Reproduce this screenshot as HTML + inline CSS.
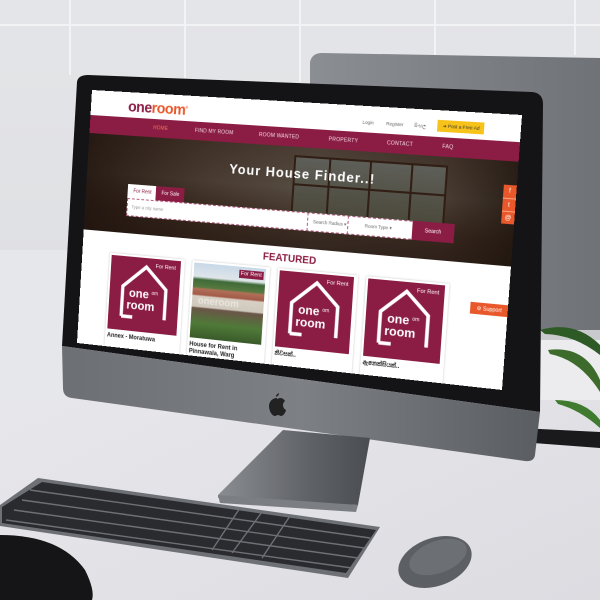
<!DOCTYPE html>
<html><head><meta charset="utf-8"><style>
*{margin:0;padding:0;box-sizing:border-box}
body{width:600px;height:600px;overflow:hidden;position:relative;background:#e2e3e6;font-family:"Liberation Sans","Noto Sans CJK SC",sans-serif}
svg.bg{position:absolute;left:0;top:0}
#scr{position:absolute;left:0;top:0;width:430px;height:255px;background:#fff;overflow:hidden;transform-origin:0 0;
transform:matrix3d(0.90123,0.036372,0,-0.00018921,-0.05643,1.00282,0,0.00003112,0,0,1,0,92,90,0,1)}
.abs{position:absolute}
.nav{left:0;top:25px;width:430px;height:18px;background:#8b1c43}
.nav span{position:absolute;top:6px;font-size:5px;color:#f3dbe3;letter-spacing:.2px}
.hero{left:0;top:43px;width:430px;height:97px;background:
linear-gradient(90deg,rgba(35,22,15,.9) 0%,rgba(60,42,30,.6) 30%,rgba(80,70,60,.4) 55%,rgba(60,45,35,.6) 85%,rgba(35,24,16,.85) 100%),
linear-gradient(180deg,#6a5a4c 0%,#8a8070 40%,#4a3526 75%,#2e2018 100%)}
.win{border:2px solid #3a2418}
.card{background:#fff;box-shadow:0 0 2px rgba(0,0,0,.25)}
.ci{background:#8b1c43}
.fr{position:absolute;right:5px;top:5px;font-size:5.5px;color:#fff}
.cap{position:absolute;left:2px;font-size:6px;font-weight:bold;color:#222;line-height:7px}
</style></head><body>
<svg class="bg" width="600" height="600" viewBox="0 0 600 600">
<defs>
<linearGradient id="wall" x1="0" y1="0" x2="0" y2="1"><stop offset="0" stop-color="#e4e5e8"/><stop offset="1" stop-color="#d9dadd"/></linearGradient>
<linearGradient id="desk" x1="0" y1="0" x2="1" y2="1"><stop offset="0" stop-color="#e9e9ed"/><stop offset="1" stop-color="#dcdce1"/></linearGradient>
<linearGradient id="mon2" x1="0" y1="0" x2="1" y2="0"><stop offset="0" stop-color="#8b8e93"/><stop offset="1" stop-color="#6f7378"/></linearGradient>
<linearGradient id="chin" x1="0" y1="0" x2="1" y2="0"><stop offset="0" stop-color="#6c6f74"/><stop offset=".5" stop-color="#7d8085"/><stop offset="1" stop-color="#5a5d62"/></linearGradient>
<linearGradient id="stand" x1="0" y1="0" x2="1" y2="0"><stop offset="0" stop-color="#8a8d92"/><stop offset=".6" stop-color="#5f6267"/><stop offset="1" stop-color="#4a4d52"/></linearGradient>
</defs>
<rect width="600" height="600" fill="url(#wall)"/>
<g stroke="#f2f3f5" stroke-width="2">
<line x1="70" y1="0" x2="70" y2="75"/><line x1="185" y1="0" x2="185" y2="78"/><line x1="300" y1="0" x2="300" y2="82"/><line x1="435" y1="0" x2="435" y2="55"/><line x1="575" y1="0" x2="575" y2="55"/>
<line x1="0" y1="25" x2="600" y2="25"/>
</g>
<rect x="0" y="330" width="600" height="270" fill="url(#desk)"/>
<rect x="0" y="250" width="70" height="150" fill="#e6e7ea"/>
<path d="M310 62 Q312 53 322 53 L600 58 L600 330 L310 330 Z" fill="url(#mon2)"/>
<rect x="530" y="330" width="70" height="18" fill="#c9cacd"/>
<rect x="520" y="340" width="80" height="60" fill="#ececef"/>
<path d="M520 428 L600 432 L600 448 L520 442 Z" fill="#1a1a1c"/>
<path d="M540 330 Q575 320 600 345 L600 355 Q575 335 545 334 Z" fill="#2e5a25"/>
<path d="M548 350 Q585 345 600 380 L600 392 Q580 360 550 354 Z" fill="#3c6b2c"/>
<path d="M555 400 Q585 400 600 420 L600 428 Q580 410 558 404 Z" fill="#3f7a2e"/>
<path d="M77 82 Q78 75 88 75 L532 92 Q543 93 543 104 L540 412 L62 346 Z" fill="#141416"/>
<path d="M62 346 L540 412 L535 455 Q534 462 525 461 L72 398 Q63 397 63 388 Z" fill="url(#chin)"/>
<path d="M283 430 L370 438 L358 505 L218 498 L218 495 Z" fill="url(#stand)"/>
<path d="M218 495 L358 505 L356 512 L220 503 Z" fill="#7b7e83"/>
<path d="M277 398 c-5 0 -8 4 -8 8 c0 5 3 10 6 10 c1 0 2-1 3-1 c1 0 2 1 3 1 c3 0 5-5 5-6 c-2-1-3-3-3-5 c0-2 1-3 2-4 c-1-2-3-3-5-3 c-1 0-2 1-3 1 z M279 393 c0 2-1 3-3 4 c0-2 1-3 3-4z" fill="#222"/>
<path d="M38 478 L380 527 L348 578 L0 526 L0 505 Z" fill="#6d7075"/>
<path d="M42 482 L376 530 L346 573 L2 523 L2 507 Z" fill="#2a2b2e"/>
<g stroke="#6d7075" stroke-width="1.4">
<path d="M30 490 L370 538"/><path d="M22 500 L364 548"/><path d="M14 510 L358 558"/><path d="M6 520 L352 568"/>
<path d="M240 508 L212 550"/><path d="M262 512 L232 553"/><path d="M290 516 L262 558"/>
</g>
<ellipse cx="435" cy="562" rx="38" ry="24" transform="rotate(-20 435 562)" fill="#5c5f64"/>
<ellipse cx="438" cy="557" rx="30" ry="16" transform="rotate(-20 438 557)" fill="#6c6f74"/>
<path d="M0 535 Q60 535 85 570 Q95 590 92 600 L0 600 Z" fill="#151517"/>
</svg>

<div id="scr">
 <div class="abs" style="left:40px;top:6px;font-size:15px;font-weight:bold;letter-spacing:-.5px"><span style="color:#8b1c43">one</span><span style="color:#e8582b">room</span><sup style="font-size:4px;color:#e8582b">®</sup></div>
 <div class="abs" style="left:280px;top:13px;font-size:4.5px;color:#666">Login</div>
 <div class="abs" style="left:303px;top:13px;font-size:4.5px;color:#666">Register</div>
 <div class="abs" style="left:330px;top:13px;font-size:4.5px;color:#666">සිංහල</div>
 <div class="abs" style="left:352px;top:9px;width:44px;height:11px;background:#f7c21a;font-size:4.5px;color:#333;padding:3px 0 0 5px">➜ Post a Free Ad</div>
 <div class="abs nav">
  <span style="left:68px;color:#f07a50">HOME</span><span style="left:112px">FIND MY ROOM</span><span style="left:178px">ROOM WANTED</span><span style="left:248px">PROPERTY</span><span style="left:305px">CONTACT</span><span style="left:358px">FAQ</span>
 </div>
 <div class="abs hero">
  <div class="abs win" style="left:215px;top:8px;width:150px;height:70px;background:linear-gradient(180deg,#7a7f78,#5a5a45)"></div>
  <div class="abs" style="left:250px;top:8px;width:2px;height:70px;background:#3a2418"></div>
  <div class="abs" style="left:290px;top:8px;width:2px;height:70px;background:#3a2418"></div>
  <div class="abs" style="left:330px;top:8px;width:2px;height:70px;background:#3a2418"></div>
  <div class="abs" style="left:215px;top:35px;width:150px;height:2px;background:#3a2418"></div>
  <div class="abs" style="left:0;top:0;width:430px;height:97px;background:rgba(30,20,15,.3)"></div>
  <div class="abs" style="left:150px;top:18px;font-size:13px;font-weight:bold;color:#fff;letter-spacing:1px">Your House Finder..!</div>
  <div class="abs" style="left:45px;top:48px;width:30px;height:14px;background:#fff;font-size:5px;color:#8b1c43;padding:4px 0 0 6px">For Rent</div>
  <div class="abs" style="left:75px;top:48px;width:30px;height:14px;background:#8b1c43;font-size:5px;color:#fff;padding:4px 0 0 6px">For Sale</div>
  <div class="abs" style="left:45px;top:62px;width:330px;height:18px;background:#fff;border:1px dashed #b06080"></div>
  <div class="abs" style="left:50px;top:68px;font-size:4.5px;color:#999">Type a city name</div>
  <div class="abs" style="left:232px;top:62px;width:40px;height:18px;border-left:1px dashed #b06080;font-size:4.5px;color:#666;padding:6px 0 0 5px">Search Radius ▾</div>
  <div class="abs" style="left:272px;top:62px;width:63px;height:18px;border-left:1px dashed #b06080;font-size:4.5px;color:#666;padding:6px 0 0 16px">Room Type ▾</div>
  <div class="abs" style="left:335px;top:62px;width:40px;height:18px;background:#8b1c43;font-size:5px;color:#fff;padding:6px 0 0 12px">Search</div>
 </div>
 <div class="abs" style="left:418px;top:65px;width:12px;height:12px;background:#e8582b;color:#fff;font-size:6px;text-align:center;line-height:12px">f</div>
 <div class="abs" style="left:418px;top:77px;width:12px;height:12px;background:#e8582b;border-top:1px solid #f5a080;color:#fff;font-size:6px;text-align:center;line-height:12px">t</div>
 <div class="abs" style="left:418px;top:89px;width:12px;height:12px;background:#e8582b;border-top:1px solid #f5a080;color:#fff;font-size:6px;text-align:center;line-height:12px">@</div>
 <div class="abs" style="left:190px;top:146px;font-size:10px;font-weight:bold;color:#8b1c43">FEATURED</div>

 <div class="abs card" style="left:30px;top:161px;width:80px;height:100px">
  <div class="abs ci" style="left:2px;top:2px;width:74px;height:74px">
   <svg width="74" height="74" viewBox="0 0 74 74" style="position:absolute;left:0;top:0"><path d="M14 60 L14 30 L38 9 L60 30 L60 60 M26 60 L14 60" fill="none" stroke="#fff" stroke-width="3.5"/><text x="21" y="40" font-size="12" font-weight="bold" fill="#fff" font-family="Liberation Sans">one</text><text x="45" y="36" font-size="5" fill="#fff" font-family="Liberation Sans">om</text><text x="19" y="52" font-size="12" font-weight="bold" fill="#fff" font-family="Liberation Sans">room</text></svg>
   <span class="fr">For Rent</span></div>
  <div class="cap" style="top:80px">Annex - Moratuwa</div>
 </div>
 <div class="abs card" style="left:118px;top:161px;width:80px;height:100px">
  <div class="abs" style="left:2px;top:2px;width:74px;height:74px;background:linear-gradient(180deg,#c8d8e8 0%,#dfe6ea 18%,#3f6a38 22%,#587a40 32%,#b07058 34%,#a35a48 42%,#d8d0c4 44%,#cfc8bc 58%,#6a5548 60%,#4f7a38 80%,#3a5a2a 100%)">
   <div class="abs" style="left:6px;top:32px;width:62px;height:10px;font-size:10px;font-weight:bold;color:rgba(255,255,255,.5)">oneroom</div>
   <span class="fr" style="background:#8b1c43;padding:1px 2px;right:2px;top:3px">For Rent</span></div>
  <div class="cap" style="top:80px">House for Rent in<br>Pinnawala, Warg</div>
 </div>
 <div class="abs card" style="left:206px;top:161px;width:80px;height:100px">
  <div class="abs ci" style="left:2px;top:2px;width:74px;height:74px">
   <svg width="74" height="74" viewBox="0 0 74 74" style="position:absolute;left:0;top:0"><path d="M14 60 L14 30 L38 9 L60 30 L60 60 M26 60 L14 60" fill="none" stroke="#fff" stroke-width="3.5"/><text x="21" y="40" font-size="12" font-weight="bold" fill="#fff" font-family="Liberation Sans">one</text><text x="45" y="36" font-size="5" fill="#fff" font-family="Liberation Sans">om</text><text x="19" y="52" font-size="12" font-weight="bold" fill="#fff" font-family="Liberation Sans">room</text></svg>
   <span class="fr">For Rent</span></div>
  <div class="cap" style="top:80px">නිවසක්..</div>
 </div>
 <div class="abs card" style="left:294px;top:161px;width:80px;height:100px">
  <div class="abs ci" style="left:2px;top:2px;width:74px;height:74px">
   <svg width="74" height="74" viewBox="0 0 74 74" style="position:absolute;left:0;top:0"><path d="M14 60 L14 30 L38 9 L60 30 L60 60 M26 60 L14 60" fill="none" stroke="#fff" stroke-width="3.5"/><text x="21" y="40" font-size="12" font-weight="bold" fill="#fff" font-family="Liberation Sans">one</text><text x="45" y="36" font-size="5" fill="#fff" font-family="Liberation Sans">om</text><text x="19" y="52" font-size="12" font-weight="bold" fill="#fff" font-family="Liberation Sans">room</text></svg>
   <span class="fr">For Rent</span></div>
  <div class="cap" style="top:80px">ඇනෙක්සියක්..</div>
 </div>
 <div class="abs" style="left:395px;top:176px;width:35px;height:11px;background:#e8582b;font-size:5px;color:#fff;padding:3px 0 0 6px">⚙ Support</div>
</div>
</body></html>
